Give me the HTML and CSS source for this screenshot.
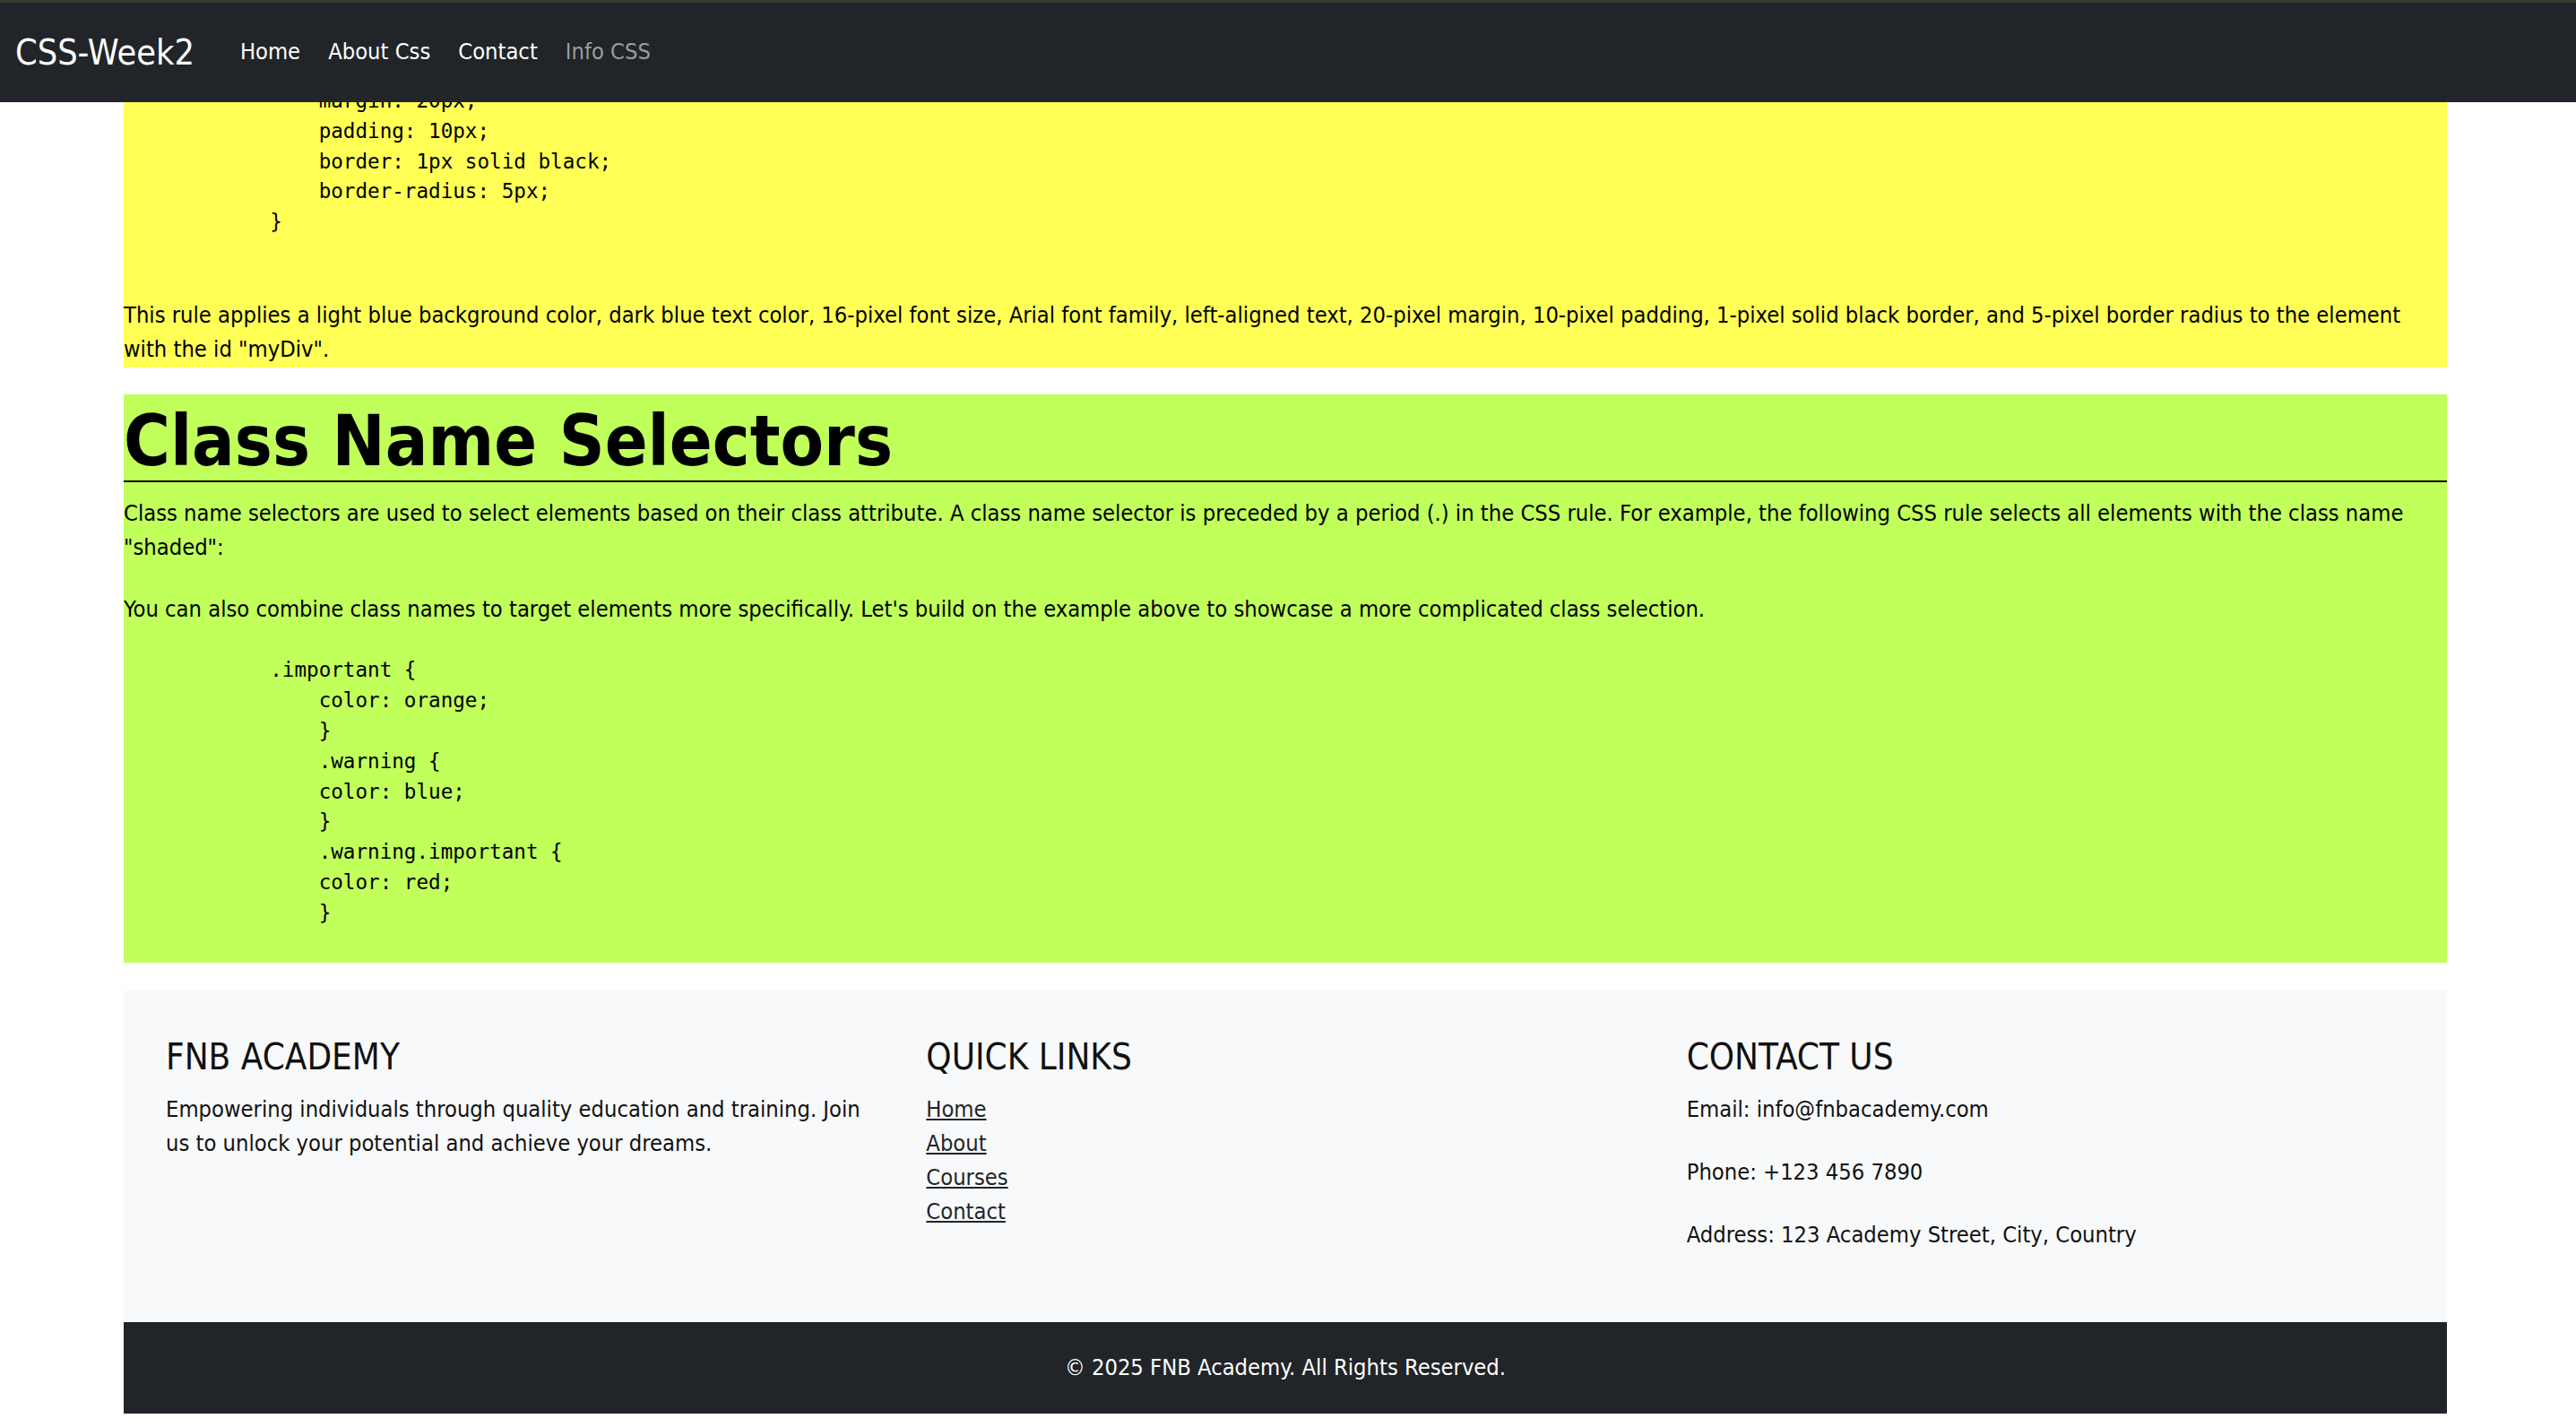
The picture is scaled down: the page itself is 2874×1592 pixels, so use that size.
FILE: index.html
```html
<!DOCTYPE html>
<html lang="en">
<head>
<meta charset="utf-8">
<title>CSS-Week2</title>
<link rel="stylesheet" href="styles.css">
</head>
<body>
<header class="navbar">
  <a class="brand" href="#">CSS-Week2</a>
  <nav class="nav-links">
    <a class="nav-link" href="#">Home</a>
    <a class="nav-link" href="#">About Css</a>
    <a class="nav-link" href="#">Contact</a>
    <a class="nav-link muted" href="#">Info CSS</a>
  </nav>
</header>

<main class="page">
  <section class="block yellow">
<pre class="code code-top">                margin: 20px;
                padding: 10px;
                border: 1px solid black;
                border-radius: 5px;
            }</pre>
    <p class="text last">This rule applies a light blue background color, dark blue text color, 16-pixel font size, Arial font family, left-aligned text, 20-pixel margin, 10-pixel padding, 1-pixel solid black border, and 5-pixel border radius to the element with the id "myDiv".</p>
  </section>

  <section class="block green">
    <h1 class="title">Class Name Selectors</h1>
    <p class="text first">Class name selectors are used to select elements based on their class attribute. A class name selector is preceded by a period (.) in the CSS rule. For example, the following CSS rule selects all elements with the class name "shaded":</p>
    <p class="text">You can also combine class names to target elements more specifically. Let's build on the example above to showcase a more complicated class selection.</p>
<pre class="code code-green">            .important {
                color: orange;
                }
                .warning {
                color: blue;
                }
                .warning.important {
                color: red;
                }</pre>
  </section>

  <footer class="footer">
    <div class="footer-grid">
      <div class="col">
        <h5 class="col-title">FNB ACADEMY</h5>
        <p class="col-text">Empowering individuals through quality education and training. Join us to unlock your potential and achieve your dreams.</p>
      </div>
      <div class="col">
        <h5 class="col-title">QUICK LINKS</h5>
        <ul class="links">
          <li><a href="#">Home</a></li>
          <li><a href="#">About</a></li>
          <li><a href="#">Courses</a></li>
          <li><a href="#">Contact</a></li>
        </ul>
      </div>
      <div class="col">
        <h5 class="col-title">CONTACT US</h5>
        <p class="contact-line">Email: info@fnbacademy.com</p>
        <p class="contact-line">Phone: +123 456 7890</p>
        <p class="contact-line">Address: 123 Academy Street, City, Country</p>
      </div>
    </div>
  </footer>
  <div class="copyright">© 2025 FNB Academy. All Rights Reserved.</div>
</main>
</body>
</html>
```

FILE: styles.css
```css
* { box-sizing: border-box; }

html, body {
  margin: 0;
  padding: 0;
  background: #ffffff;
}

body {
  font-family: "DejaVu Sans Condensed", "DejaVu Sans", sans-serif;
  font-stretch: semi-condensed;
  font-size: 25.3px;
  line-height: 38.5px;
  color: #111111;
  padding-top: 96px;
  padding-bottom: 16px;
}

/* navbar overlays scrolled content */
.navbar {
  position: fixed;
  top: 0;
  left: 0;
  right: 0;
  height: 114px;
  background: #212529;
  border-top: 3px solid #3c3b31;
  display: flex;
  align-items: center;
  padding-left: 17px;
  z-index: 10;
}

.brand {
  color: #ffffff;
  text-decoration: none;
  font-size: 39.3px;
  line-height: 48px;
  margin-right: 51px;
}

.nav-links {
  display: flex;
  gap: 31px;
}

.nav-link {
  color: #ffffff;
  text-decoration: none;
  font-size: 25.3px;
}

.nav-link.muted {
  color: #9a9c9e;
}

.page {
  width: 2592px;
  margin-left: 138px;
}

.block {
  display: flow-root;
}

.yellow {
  background: #ffff55;
}

.green {
  background: #c1ff5b;
  margin-top: 30px;
}

.code {
  font-family: "DejaVu Sans Mono", monospace;
  font-size: 22.6px;
  line-height: 33.8px;
  margin: 0;
  padding-left: 0;
  color: #000;
}

.code-top {
  margin-bottom: 68px;
}

.code-green {
  margin-top: 32px;
  margin-bottom: 38px;
}

.text {
  margin: 0;
  color: #000;
}

.text + .text {
  margin-top: 30px;
}

.text.first {
  margin-top: 16px;
}

.title {
  margin: 0;
  padding-top: 8px;
  font-size: 78.6px;
  line-height: 88px;
  font-weight: 700;
  color: #000;
  border-bottom: 2px solid #000;
}

.footer {
  background: #f8f9fa;
  margin-top: 31px;
  padding: 50px 0 78px 47px;
}

.footer-grid {
  display: grid;
  grid-template-columns: repeat(3, 1fr);
}

.col {
  padding-right: 50px;
}

.col-title {
  margin: 0 0 16px 0;
  font-size: 40px;
  line-height: 48px;
  font-weight: 400;
  color: #111;
}

.col-text {
  margin: 0;
}

.links {
  list-style: none;
  margin: 0;
  padding: 0;
}

.links li {
  line-height: 38px;
}

.links a {
  color: #212529;
  text-decoration: underline;
}

.contact-line {
  margin: 0 0 31.5px 0;
}

.contact-line:last-child {
  margin-bottom: 0;
}

.copyright {
  background: #212529;
  color: #ffffff;
  text-align: center;
  padding: 32px 0;
  height: 102px;
}
```
